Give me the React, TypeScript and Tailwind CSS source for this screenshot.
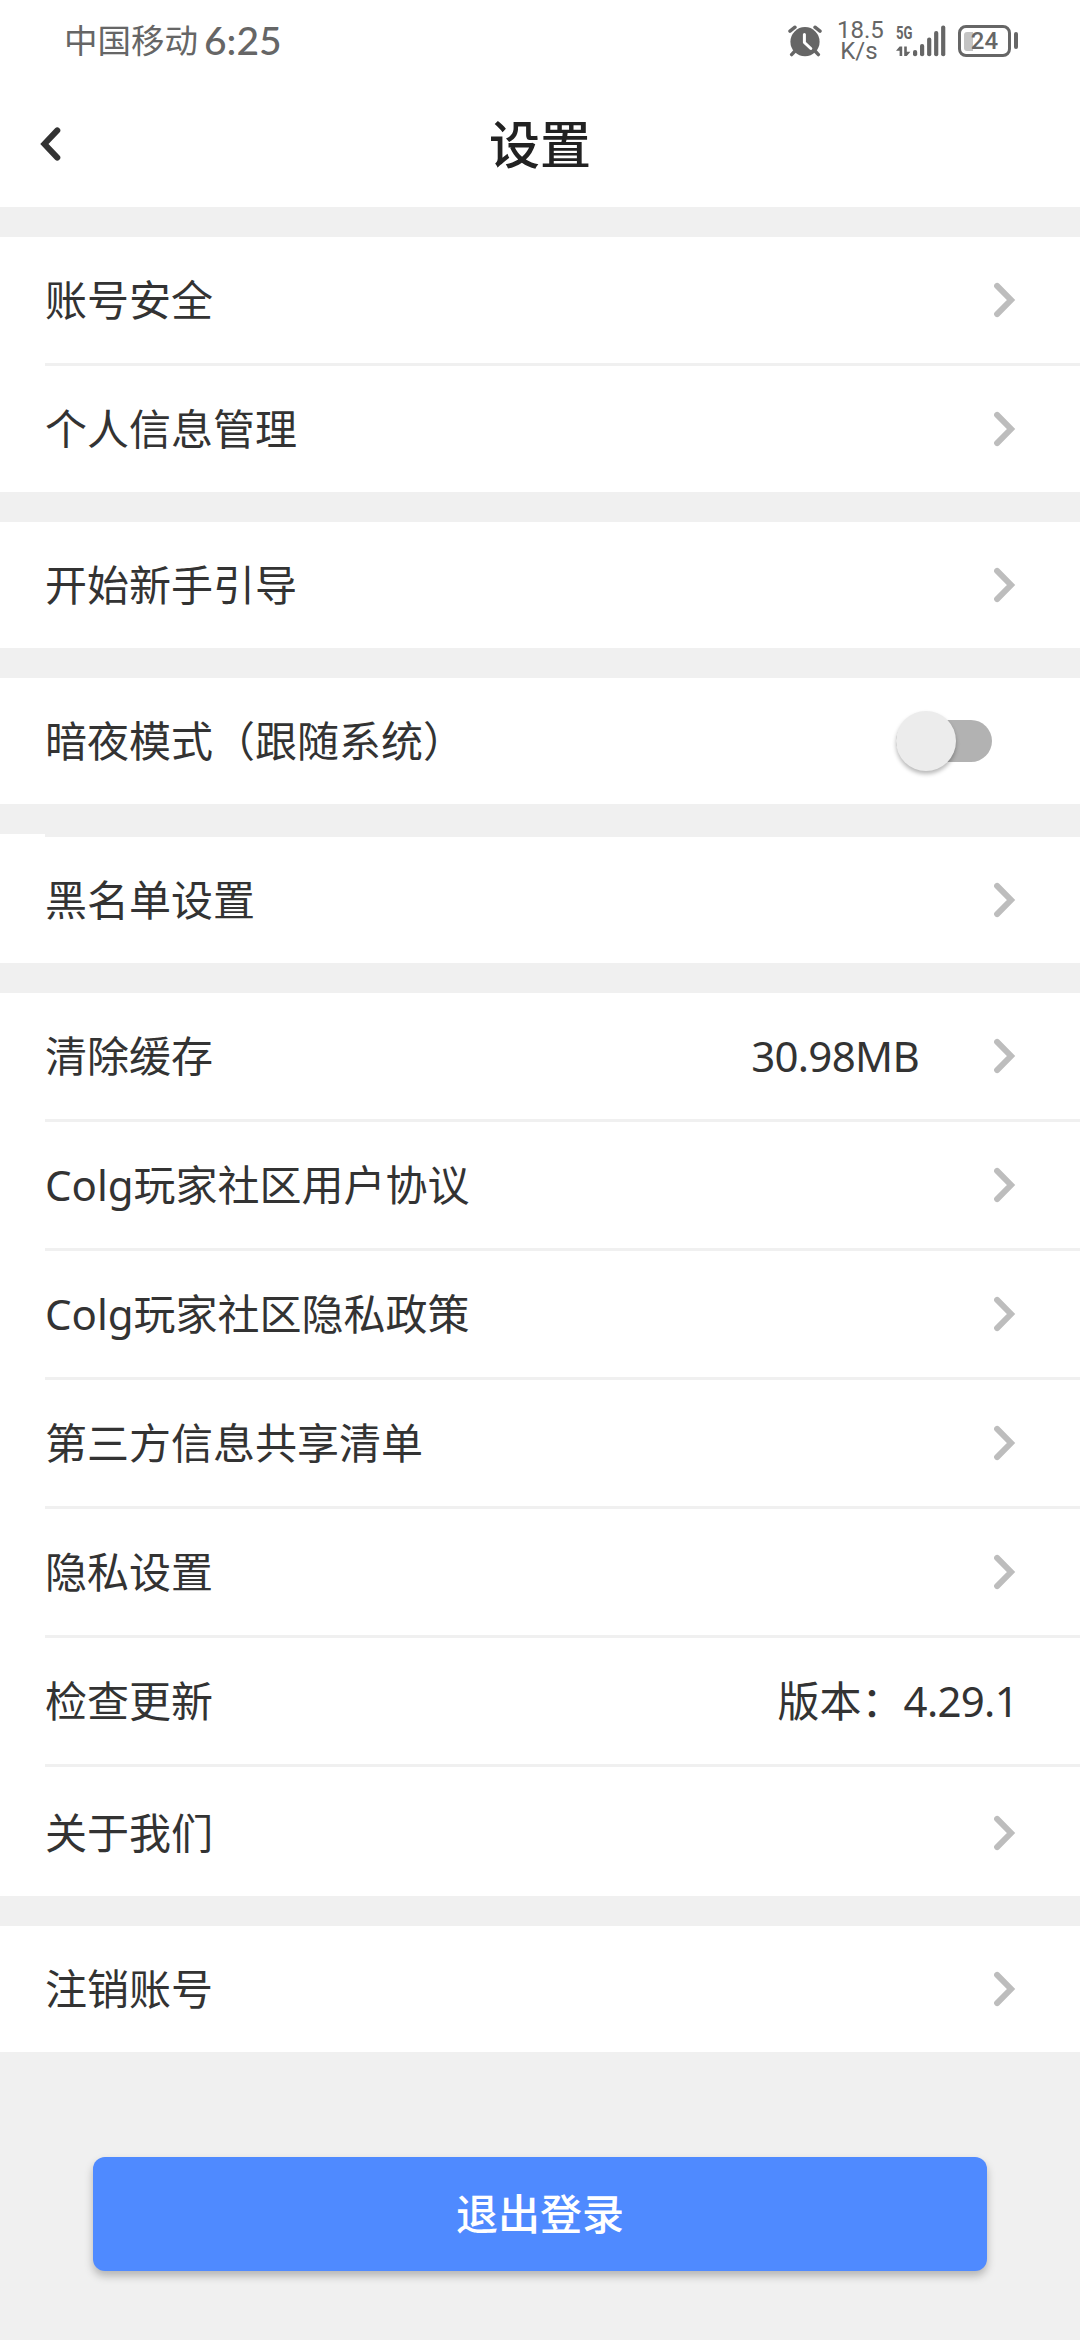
import { useState } from "react";
import clsx from "clsx";

type Item = {
  label: string;
  valueLabel?: string;
  value?: string;
  arrow?: boolean;
  toggle?: boolean;
  divider?: boolean;
  spaced?: boolean;
};

const groups: Item[][] = [
  [
    { label: "账号安全", arrow: true },
    { label: "个人信息管理", arrow: true, divider: true },
  ],
  [{ label: "开始新手引导", arrow: true }],
  [{ label: "暗夜模式（跟随系统）", toggle: true }],
  [{ label: "黑名单设置", arrow: true, divider: true }],
  [
    { label: "清除缓存", value: "30.98MB", arrow: true },
    { label: "Colg玩家社区用户协议", arrow: true, divider: true },
    { label: "Colg玩家社区隐私政策", arrow: true, divider: true },
    { label: "第三方信息共享清单", arrow: true, divider: true },
    { label: "隐私设置", arrow: true, divider: true },
    { label: "检查更新", valueLabel: "版本：", value: "4.29.1", divider: true },
    { label: "关于我们", arrow: true, divider: true, spaced: true },
  ],
  [{ label: "注销账号", arrow: true }],
];

function ChevronRight() {
  return (
    <svg width="24" height="36" viewBox="0 0 24 36" fill="none" className="shrink-0">
      <path d="M5.1 3.9 19 18 5.1 32.1" stroke="#bdbdbd" strokeWidth="6" strokeLinecap="round" />
    </svg>
  );
}

function AlarmIcon() {
  return (
    <svg width="34" height="32" viewBox="0 0 34 32" fill="none">
      <circle cx="17" cy="16.7" r="14.6" fill="#666" />
      <path
        d="M2 6.2 7 2.2M32 6.2 27 2.2M6.5 26.5 3.6 29.6M27.5 26.5l2.9 3.1"
        stroke="#666"
        strokeWidth="3.4"
        strokeLinecap="round"
      />
      <path d="M16.4 9.5v8l6.4 6" stroke="#fff" strokeWidth="3" strokeLinecap="round" strokeLinejoin="round" />
    </svg>
  );
}

function SignalIcon() {
  return (
    <svg width="50" height="32" viewBox="0 0 50 32" fill="#666" className="overflow-visible">
      <text
        x="0"
        y="14.2"
        fontSize="18"
        fontWeight="700"
        fontFamily="Roboto, sans-serif"
        textLength="16.5"
        lengthAdjust="spacingAndGlyphs"
      >
        5G
      </text>
      <path d="M3.6 21.6h2.6V31H3.6v-5.2H0zM8.2 21.6h2.6v5.2h3.6L10.8 31H8.2z" />
      <rect x="17" y="25" width="4.2" height="6.2" rx="2" />
      <rect x="24" y="19" width="4.2" height="12.2" rx="2" />
      <rect x="31.1" y="12.4" width="4.2" height="18.8" rx="2" />
      <rect x="38.1" y="6" width="4.2" height="25.2" rx="2" />
      <rect x="45.1" y="0.6" width="4.2" height="30.6" rx="2" />
    </svg>
  );
}

function Battery({ level }: { level: number }) {
  return (
    <div className="flex items-center gap-[3px]">
      <div className="relative flex h-8 w-[53px] items-center justify-center rounded-[8px] border-3 border-[#666]">
        <div className="absolute top-[4px] left-[3px] h-[19px] w-[9px] rounded-l-[3px] bg-[#c4c4c4]" />
        <span className="relative font-[Roboto] text-[24px] leading-none font-medium">{level}</span>
      </div>
      <div className="h-[17px] w-1 rounded-full bg-[#666]" />
    </div>
  );
}

function StatusBar() {
  return (
    <div className="flex h-[81px] items-center justify-between pr-[62px] pl-16 text-[#666]">
      <div className="flex items-center">
        <span className="text-[33.5px] leading-none">中国移动</span>
        <span className="ml-[6px] font-[Lato] text-[39px] leading-none font-medium">6:25</span>
      </div>
      <div className="flex items-center">
        <AlarmIcon />
        <div className="ml-[15px] w-11 text-center font-[Roboto] text-[24px] leading-[21px]">
          <div>18.5</div>
          <div>K/s</div>
        </div>
        <div className="mr-[12px] ml-[15px]">
          <SignalIcon />
        </div>
        <Battery level={24} />
      </div>
    </div>
  );
}

function Header() {
  return (
    <div className="flex h-[126px] items-center px-9">
      <button type="button" aria-label="返回" className="w-12">
        <svg width="28" height="36" viewBox="0 0 28 36" fill="none">
          <path d="M21.3 4.4 8.4 18l12.9 13.6" stroke="#333" strokeWidth="6" strokeLinecap="round" />
        </svg>
      </button>
      <h1 className="flex-1 text-center text-[51px] leading-none font-medium text-[#222]">设置</h1>
      <div className="w-12" />
    </div>
  );
}

function Toggle() {
  const [on, setOn] = useState(false);
  return (
    <button
      type="button"
      role="switch"
      aria-checked={on}
      onClick={() => setOn(!on)}
      className="mr-[22px] flex h-[60px] w-24 items-center"
    >
      <span className={clsx("flex h-[42px] w-full items-center rounded-full", on ? "bg-[#a7c4ff]" : "bg-[#b2b2b2]")}>
        <span
          className={clsx(
            "size-[60px] shrink-0 rounded-full shadow-[0_3px_4px_rgba(0,0,0,0.28)]",
            on ? "ml-auto bg-[#4f8aff]" : "bg-[#ececec]",
          )}
        />
      </span>
    </button>
  );
}

function Row({ item }: { item: Item }) {
  return (
    <div className="bg-white">
      {item.divider && <div className="ml-[45px] h-[3px] bg-[#f0f0f0]" />}
      <div
        className={clsx(
          "flex items-center pr-[66px] pl-[45px] text-[42px] leading-none text-[#333]",
          item.spaced ? "h-[129px] pt-[3px]" : "h-[126px]",
        )}
      >
        <span className="flex-1">{item.label}</span>
        {item.valueLabel && <span>{item.valueLabel}</span>}
        {item.value && (
          <span className={clsx("tracking-[-0.7px]", item.arrow ? "mr-[73px]" : "-mr-[4px]")}>{item.value}</span>
        )}
        {item.arrow && (
          <span className="-mr-[2px]">
            <ChevronRight />
          </span>
        )}
        {item.toggle && <Toggle />}
      </div>
    </div>
  );
}

export default function App() {
  return (
    <div className="min-h-[2340px] w-[1080px] bg-[#f0f0f0] font-['Noto_Sans','Noto_Sans_CJK_SC',sans-serif]">
      <div className="bg-white">
        <StatusBar />
        <Header />
      </div>
      <div className="flex flex-col gap-[30px] pt-[30px]">
        {groups.map((items) => (
          <div key={items[0].label}>
            {items.map((item) => (
              <Row key={item.label} item={item} />
            ))}
          </div>
        ))}
      </div>
      <div className="px-[93px] pt-[105px]">
        <button
          type="button"
          className="h-[114px] w-full rounded-xl bg-[#4f8aff] text-[42px] leading-none font-medium text-white shadow-[0_5px_8px_rgba(0,0,0,0.25)]"
        >
          退出登录
        </button>
      </div>
    </div>
  );
}
